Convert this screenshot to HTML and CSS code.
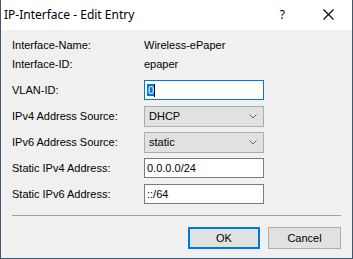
FILE: index.html
```html
<!DOCTYPE html>
<html lang="en">
<head>
    <meta charset="UTF-8">
    <title>IP-Interface - Edit Entry</title>
    <link rel="stylesheet" href="styles.css">
</head>
<body>
    <div class="window">
        <!-- Title bar -->
        <div class="titlebar">
            <span class="title">IP-Interface - Edit Entry</span>
            <span class="help">?</span>
            <svg class="close" width="11" height="11" viewBox="0 0 11 11">
                <path d="M0.5 0.5 L10.5 10.5 M10.5 0.5 L0.5 10.5" stroke="#000" stroke-width="1.1" fill="none"/>
            </svg>
        </div>

        <div class="content">
            <div class="row text-row">
                <span class="label">Interface-Name:</span>
                <span class="value">Wireless-ePaper</span>
            </div>
            <div class="row text-row">
                <span class="label">Interface-ID:</span>
                <span class="value">epaper</span>
            </div>

            <div class="row field-row first-field">
                <span class="label">VLAN-ID:</span>
                <div class="textbox focused"><span class="selected">0</span><span class="caret"></span></div>
            </div>
            <div class="row field-row">
                <span class="label">IPv4 Address Source:</span>
                <div class="combo">
                    <span>DHCP</span>
                    <svg width="8" height="5" viewBox="0 0 8 5"><path d="M0.5 0.5 L4 4 L7.5 0.5" stroke="#606060" fill="none"/></svg>
                </div>
            </div>
            <div class="row field-row">
                <span class="label">IPv6 Address Source:</span>
                <div class="combo">
                    <span>static</span>
                    <svg width="8" height="5" viewBox="0 0 8 5"><path d="M0.5 0.5 L4 4 L7.5 0.5" stroke="#606060" fill="none"/></svg>
                </div>
            </div>
            <div class="row field-row">
                <span class="label">Static IPv4 Address:</span>
                <div class="textbox">0.0.0.0/24</div>
            </div>
            <div class="row field-row">
                <span class="label">Static IPv6 Address:</span>
                <div class="textbox">::/64</div>
            </div>

            <div class="separator"></div>

            <div class="buttons">
                <div class="button default">OK</div>
                <div class="button">Cancel</div>
            </div>
        </div>
    </div>
</body>
</html>
```

FILE: styles.css
```css
body {
    margin: 0;
    font-family: "Liberation Sans", Arial, sans-serif;
    font-size: 11px;
    color: #000;
    background-color: #f0f0f0;
}
.window {
    width: 351px;
    height: 258px;
    border: 1px solid #42576c;
    border-top: none;
    background-color: #f0f0f0;
    display: flex;
    flex-direction: column;
}
.titlebar {
    height: 30px;
    background-color: #fff;
    display: flex;
    align-items: center;
    padding-left: 3px;
}
.title {
    font-family: "Noto Sans", sans-serif;
    font-size: 12px;
    flex: 1;
    margin-top: -1px;
}
.help {
    font-family: "Noto Sans", sans-serif;
    font-size: 12px;
    margin-right: 38px;
    margin-top: -1px;
}
.close {
    margin-right: 18px;
    margin-top: -1px;
}
.content {
    padding: 5px 11px 0 11px;
}
.row {
    display: flex;
    align-items: center;
}
.text-row {
    height: 19px;
}
.field-row {
    height: 26px;
}
.first-field {
    margin-top: 4px;
}
.label {
    width: 132px;
    flex: none;
}
.textbox {
    width: 116px;
    height: 18px;
    border: 1px solid #7a7a7a;
    background-color: #fff;
    display: flex;
    align-items: center;
    padding-left: 2px;
    box-sizing: content-box;
}
.textbox.focused {
    border-color: #0078d7;
}
.selected {
    background-color: #0078d7;
    color: #fff;
    padding: 0 0 0 1px;
    line-height: 12px;
}
.caret {
    width: 1px;
    height: 13px;
    background-color: #000;
}
.combo {
    width: 108px;
    height: 19px;
    border: 1px solid #adadad;
    background-color: #e1e1e1;
    display: flex;
    align-items: center;
    justify-content: space-between;
    padding: 0 6px 0 4px;
    box-sizing: content-box;
}
.separator {
    height: 1px;
    background-color: #a0a0a0;
    margin-top: 8px;
}
.buttons {
    display: flex;
    justify-content: flex-end;
    gap: 8px;
    margin-top: 11px;
}
.button {
    width: 71px;
    height: 20px;
    border: 1px solid #adadad;
    background-color: #e1e1e1;
    display: flex;
    align-items: center;
    justify-content: center;
}
.button.default {
    border: 2px solid #0078d7;
    width: 68px;
    height: 18px;
}
```
